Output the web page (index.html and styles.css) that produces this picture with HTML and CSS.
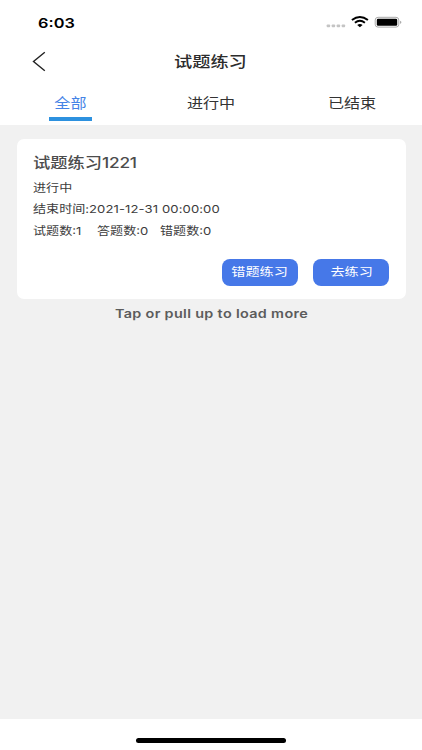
FILE: index.html
```html
<!DOCTYPE html>
<html lang="zh-CN">
<head>
<meta charset="utf-8">
<title>试题练习</title>
<link rel="stylesheet" href="styles.css">
</head>
<body>
<div class="screen">
  <header class="top">
    <div class="status">
      <span class="clock wide">6:03</span>
      <svg class="indicators" width="78" height="16" viewBox="0 0 78 16">
        <g fill="#c4c4c4"><rect x="1.7" y="10.4" width="3.4" height="2.9" rx=".8"/><rect x="6.7" y="10.4" width="3.4" height="2.9" rx=".8"/><rect x="11.7" y="10.4" width="3.4" height="2.9" rx=".8"/><rect x="16.7" y="10.4" width="3.4" height="2.9" rx=".8"/></g>
        <g fill="none" stroke="#000" stroke-width="1.9"><path d="M26.9 6.1Q34.9-.3 42.9 6.1"/><path d="M29.9 8.8Q34.9 4.9 39.9 8.8"/></g>
        <path d="M32.2 11Q34.9 8.8 37.6 11L34.9 13.3Z"/>
        <rect x="50.2" y="3.3" width="23.6" height="9.8" rx="2.8" fill="none" stroke="#aaa"/>
        <rect x="51.8" y="4.8" width="20.4" height="6.9" rx="1.3"/>
        <path d="M75.2 6.7Q77.6 8.2 75.2 9.9Z" fill="#999"/>
      </svg>
    </div>
    <div class="nav">
      <svg class="back" width="14" height="21" viewBox="0 0 14 21"><path d="M12.8 1.2L1.5 10.5L12.8 19.8" fill="none" stroke="#222" stroke-width="1.4"/></svg>
      <h1 class="wide">试题练习</h1>
    </div>
    <nav class="tabs">
      <div class="tab active"><span class="wide">全部</span></div>
      <div class="tab"><span class="wide">进行中</span></div>
      <div class="tab"><span class="wide">已结束</span></div>
    </nav>
  </header>
  <main>
    <section class="card">
      <h2 class="wide">试题练习<span class="digits">1221</span></h2>
      <p class="wide">进行中</p>
      <p class="wide">结束时间:<span class="date">2021-12-31 00:00:00</span></p>
      <div class="counts"><p class="wide">试题数:1</p><p class="wide">答题数:0</p><p class="wide">错题数:0</p></div>
      <div class="actions">
        <button><span class="wide">错题练习</span></button>
        <button><span class="wide">去练习</span></button>
      </div>
    </section>
    <div class="more"><span class="wide">Tap or pull up to load more</span></div>
  </main>
  <footer><div class="home"></div></footer>
</div>
</body>
</html>
```
FILE: styles.css
```css
* { box-sizing: border-box; margin: 0; padding: 0; }
body { font-family: Inter, "Noto Sans CJK SC", sans-serif; color: #333; background: #fff; }
.screen { width: 422px; height: 750px; display: flex; flex-direction: column; overflow: hidden; }
.wide { display: block; width: max-content; white-space: nowrap; transform: scaleX(1.2); transform-origin: center; }
.top { height: 125px; background: #fff; }
.status { height: 44px; display: flex; justify-content: space-between; padding: 14px 19px 0 38px; }
.clock { font-size: 13.6px; line-height: 19px; font-weight: 600; color: #000; transform-origin: left; }
.nav { height: 36px; display: grid; grid-template-columns: 33px 1fr 33px; align-items: center; }
.back { margin-left: 32px; margin-top: -1px; }
h1 { justify-self: center; margin-right: 1px; font-size: 15.2px; line-height: 36px; font-weight: 500; color: #2c2c2c; }
.tabs { height: 45px; display: grid; grid-template-columns: repeat(3, 1fr); }
.tab { display: flex; flex-direction: column; align-items: center; font-size: 13.4px; line-height: 46px; height: 41px; }
.tab .wide { height: 37px; }
.active { color: #4583e6; }
.active::after { content: ""; width: 43px; height: 4px; flex: none; background: #2d91df; }
main { flex: 1; background: #f1f1f1; padding: 14px 16.5px 0; }
.card { height: 160px; background: #fff; border-radius: 7px; padding: 11px 16.25px 0 16.5px; }
.card .wide { transform-origin: left; }
h2 { font-size: 14.4px; line-height: 25px; height: 27.5px; font-weight: 500; color: #4c4c4c; }
.digits { letter-spacing: -.2px; }
.date { letter-spacing: .09px; }
p { font-size: 10.9px; line-height: 21.5px; height: 21.5px; color: #3c3c3c; }
.counts { display: grid; grid-template-columns: 64px 63px 1fr; }
.actions { display: flex; gap: 15.5px; justify-content: flex-end; margin-top: 16.5px; }
button { width: 76px; height: 27px; border: 0; border-radius: 8px; background: #4678e8; color: #fff; font: 400 11.8px/27px Inter, "Noto Sans CJK SC", sans-serif; display: flex; justify-content: center; }
.card button .wide { transform-origin: center; }
.more { display: flex; justify-content: center; font-size: 12px; line-height: 30px; letter-spacing: .27px; font-weight: 600; color: #5c5c5c; }
footer { height: 31px; display: flex; justify-content: center; padding-top: 19px; background: #fff; }
.home { width: 150px; height: 5px; border-radius: 3px; background: #000; }
```
